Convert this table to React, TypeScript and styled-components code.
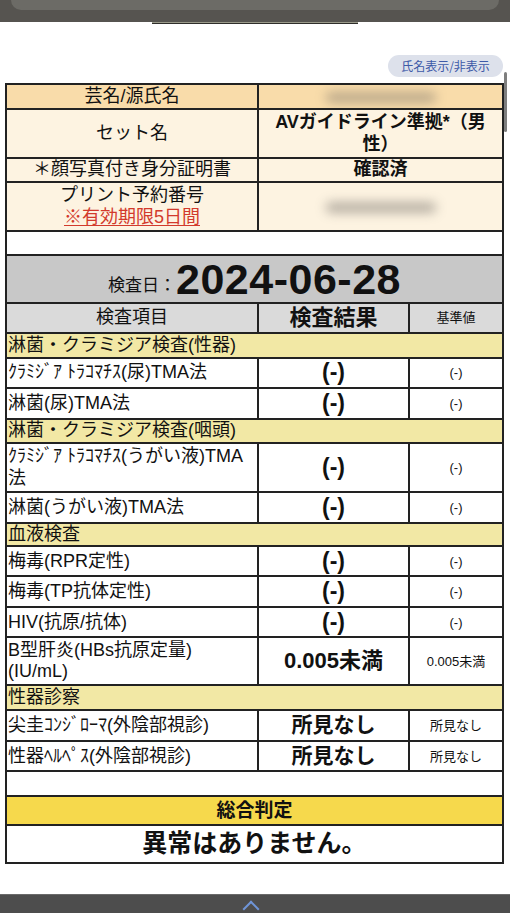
import React from "react";
import styled, { createGlobalStyle } from "styled-components";

const Global = createGlobalStyle`
  html, body { margin: 0; padding: 0; background: #ffffff; }
  body {
    font-family: "Liberation Sans", "Noto Sans CJK JP", sans-serif;
    color: #111111;
  }
`;

const Page = styled.div`
  position: relative;
  width: 510px;
  height: 913px;
  overflow: hidden;
  display: flex;
  flex-direction: column;
  background: #ffffff;
`;

const TopBar = styled.div`
  height: 22px;
  background: #565450;
  display: flex;
  justify-content: center;
`;

const TopInner = styled.div`
  width: 488px;
  height: 10px;
  background: #6c6b66;
  border-radius: 0 0 10px 10px;
`;

const Handle = styled.div`
  margin-left: 152px;
  width: 206px;
  height: 2px;
  background: #2e2e2a;
  border-top: 1px solid #9a9a8a;
  box-sizing: border-box;
`;

const ToggleRow = styled.div`
  display: flex;
  justify-content: flex-end;
  padding-right: 7px;
  margin-top: 31px;
`;

const ToggleButton = styled.button`
  height: 22px;
  width: 115px;
  border: none;
  border-radius: 11px;
  background: #dde1eb;
  color: #3d5aa8;
  font-family: "Noto Sans CJK JP", sans-serif;
  font-size: 12px;
  padding: 0;
  line-height: 22px;
`;

const Sheet = styled.table`
  margin: 6px 0 0 5px;
  width: 499px;
  table-layout: fixed;
  border-collapse: collapse;
  border: 2px solid #222;
`;

const Row = styled.tr<{ $h: number }>`
  height: ${(p) => p.$h}px;
`;

const Cell = styled.td<{
  $bg?: string;
  $align?: string;
  $size?: number;
  $bold?: boolean;
}>`
  border: 2px solid #222;
  padding: 0 1px;
  background: ${(p) => p.$bg || "#ffffff"};
  text-align: ${(p) => p.$align || "center"};
  font-size: ${(p) => p.$size || 18}px;
  font-weight: ${(p) => (p.$bold ? 700 : 400)};
  line-height: 1.18;
  vertical-align: middle;
  overflow: hidden;
  white-space: nowrap;
  position: relative;
`;

const Smudge = styled.span<{ $w: number; $op: number }>`
  display: inline-block;
  width: ${(p) => p.$w}px;
  height: 9px;
  border-radius: 6px;
  background: #6f6a64;
  opacity: ${(p) => p.$op};
  filter: blur(6px);
  vertical-align: middle;
`;

const Notice = styled.span`
  color: #d23a2c;
  text-decoration: underline;
  text-underline-offset: 2px;
`;

const DateLabel = styled.span`
  font-size: 17px;
  font-family: "Noto Sans CJK JP", sans-serif;
`;

const DateValue = styled.span`
  font-size: 43px;
  line-height: 1;
  font-weight: 700;
  letter-spacing: 0.5px;
  vertical-align: -3px;
`;

const BottomBar = styled.div`
  margin-top: auto;
  height: 18px;
  background: #4d4d4d;
  border-top: 1px solid #6a6a6a;
  position: relative;
`;

const BarIcon = styled.span<{ $left: number }>`
  position: absolute;
  left: ${(p) => p.$left}px;
  top: 8px;
  width: 10px;
  height: 10px;
  border-top: 2px solid #6f95d8;
  border-left: 2px solid #6f95d8;
  transform: rotate(45deg);
`;

const ScrollIndicator = styled.div`
  position: absolute;
  left: 504px;
  top: 72px;
  width: 3px;
  height: 60px;
  border-radius: 2px;
  background: #7e7e7e;
`;

const ORANGE = "#f9dcaa";
const CREAM = "#fdf3e1";
const GRAY = "#c8c8c8";
const GRAY_LIGHT = "#dadada";
const YELLOW = "#f2e8a5";
const GOLD = "#f6d94c";

type Item = {
  name: React.ReactNode;
  result: string;
  ref: string;
  h: number;
  size: number;
};
type Group = { title: string; h: number; items: Item[] };

const groups: Group[] = [
  {
    title: "淋菌・クラミジア検査(性器)",
    h: 25,
    items: [
      { name: "ｸﾗﾐｼﾞｱ ﾄﾗｺﾏﾁｽ(尿)TMA法", result: "(-)", ref: "(-)", h: 30, size: 23 },
      { name: "淋菌(尿)TMA法", result: "(-)", ref: "(-)", h: 31, size: 23 },
    ],
  },
  {
    title: "淋菌・クラミジア検査(咽頭)",
    h: 24,
    items: [
      {
        name: (
          <>
            ｸﾗﾐｼﾞｱ ﾄﾗｺﾏﾁｽ(うがい液)TMA
            <br />法
          </>
        ),
        result: "(-)",
        ref: "(-)",
        h: 49,
        size: 23,
      },
      { name: "淋菌(うがい液)TMA法", result: "(-)", ref: "(-)", h: 31, size: 23 },
    ],
  },
  {
    title: "血液検査",
    h: 23,
    items: [
      { name: "梅毒(RPR定性)", result: "(-)", ref: "(-)", h: 30, size: 23 },
      { name: "梅毒(TP抗体定性)", result: "(-)", ref: "(-)", h: 31, size: 23 },
      { name: "HIV(抗原/抗体)", result: "(-)", ref: "(-)", h: 30, size: 23 },
      {
        name: (
          <>
            B型肝炎(HBs抗原定量)
            <br />
            (IU/mL)
          </>
        ),
        result: "0.005未満",
        ref: "0.005未満",
        h: 48,
        size: 22,
      },
    ],
  },
  {
    title: "性器診察",
    h: 25,
    items: [
      { name: "尖圭ｺﾝｼﾞﾛｰﾏ(外陰部視診)", result: "所見なし", ref: "所見なし", h: 31, size: 21 },
      { name: "性器ﾍﾙﾍﾟｽ(外陰部視診)", result: "所見なし", ref: "所見なし", h: 30, size: 21 },
    ],
  },
];

export default function App() {
  return (
    <Page>
      <Global />
      <TopBar>
        <TopInner />
      </TopBar>
      <Handle />
      <ToggleRow>
        <ToggleButton>氏名表示/非表示</ToggleButton>
      </ToggleRow>
      <Sheet>
        <colgroup>
          <col style={{ width: 252 }} />
          <col style={{ width: 151 }} />
          <col style={{ width: 94 }} />
        </colgroup>
        <tbody>
          <Row $h={25}>
            <Cell $bg={ORANGE}>芸名/源氏名</Cell>
            <Cell $bg={ORANGE} colSpan={2}>
              <Smudge $w={110} $op={0.55} />
            </Cell>
          </Row>
          <Row $h={49}>
            <Cell $bg={CREAM}>セット名</Cell>
            <Cell $bg={CREAM} colSpan={2} $bold>
              AVガイドライン準拠*（男
              <br />
              性）
            </Cell>
          </Row>
          <Row $h={24}>
            <Cell $bg={CREAM}>＊顔写真付き身分証明書</Cell>
            <Cell $bg={CREAM} colSpan={2} $bold>
              確認済
            </Cell>
          </Row>
          <Row $h={49}>
            <Cell $bg={CREAM}>
              プリント予約番号
              <br />
              <Notice>※有効期限5日間</Notice>
            </Cell>
            <Cell $bg={CREAM} colSpan={2}>
              <Smudge $w={110} $op={0.6} />
            </Cell>
          </Row>
          <Row $h={24}>
            <Cell colSpan={3} />
          </Row>
          <Row $h={48}>
            <Cell $bg={GRAY} colSpan={3}>
              <DateLabel>検査日：</DateLabel>
              <DateValue>2024-06-28</DateValue>
            </Cell>
          </Row>
          <Row $h={30}>
            <Cell $bg={GRAY_LIGHT}>検査項目</Cell>
            <Cell $bg={GRAY_LIGHT} $bold $size={22}>
              検査結果
            </Cell>
            <Cell $bg={GRAY_LIGHT} $size={13}>
              基準値
            </Cell>
          </Row>
          {groups.map((g) => (
            <React.Fragment key={g.title}>
              <Row $h={g.h}>
                <Cell $bg={YELLOW} colSpan={3} $align="left">
                  {g.title}
                </Cell>
              </Row>
              {g.items.map((it, i) => (
                <Row $h={it.h} key={i}>
                  <Cell $align="left">{it.name}</Cell>
                  <Cell $bold $size={it.size}>
                    {it.result}
                  </Cell>
                  <Cell $size={13}>{it.ref}</Cell>
                </Row>
              ))}
            </React.Fragment>
          ))}
          <Row $h={25}>
            <Cell colSpan={3} />
          </Row>
          <Row $h={29}>
            <Cell $bg={GOLD} colSpan={3} $bold $size={19}>
              総合判定
            </Cell>
          </Row>
          <Row $h={38}>
            <Cell colSpan={3} $bold $size={25}>
              異常はありません。
            </Cell>
          </Row>
        </tbody>
      </Sheet>
      <BottomBar>
        <BarIcon $left={245} />
      </BottomBar>
      <ScrollIndicator />
    </Page>
  );
}
